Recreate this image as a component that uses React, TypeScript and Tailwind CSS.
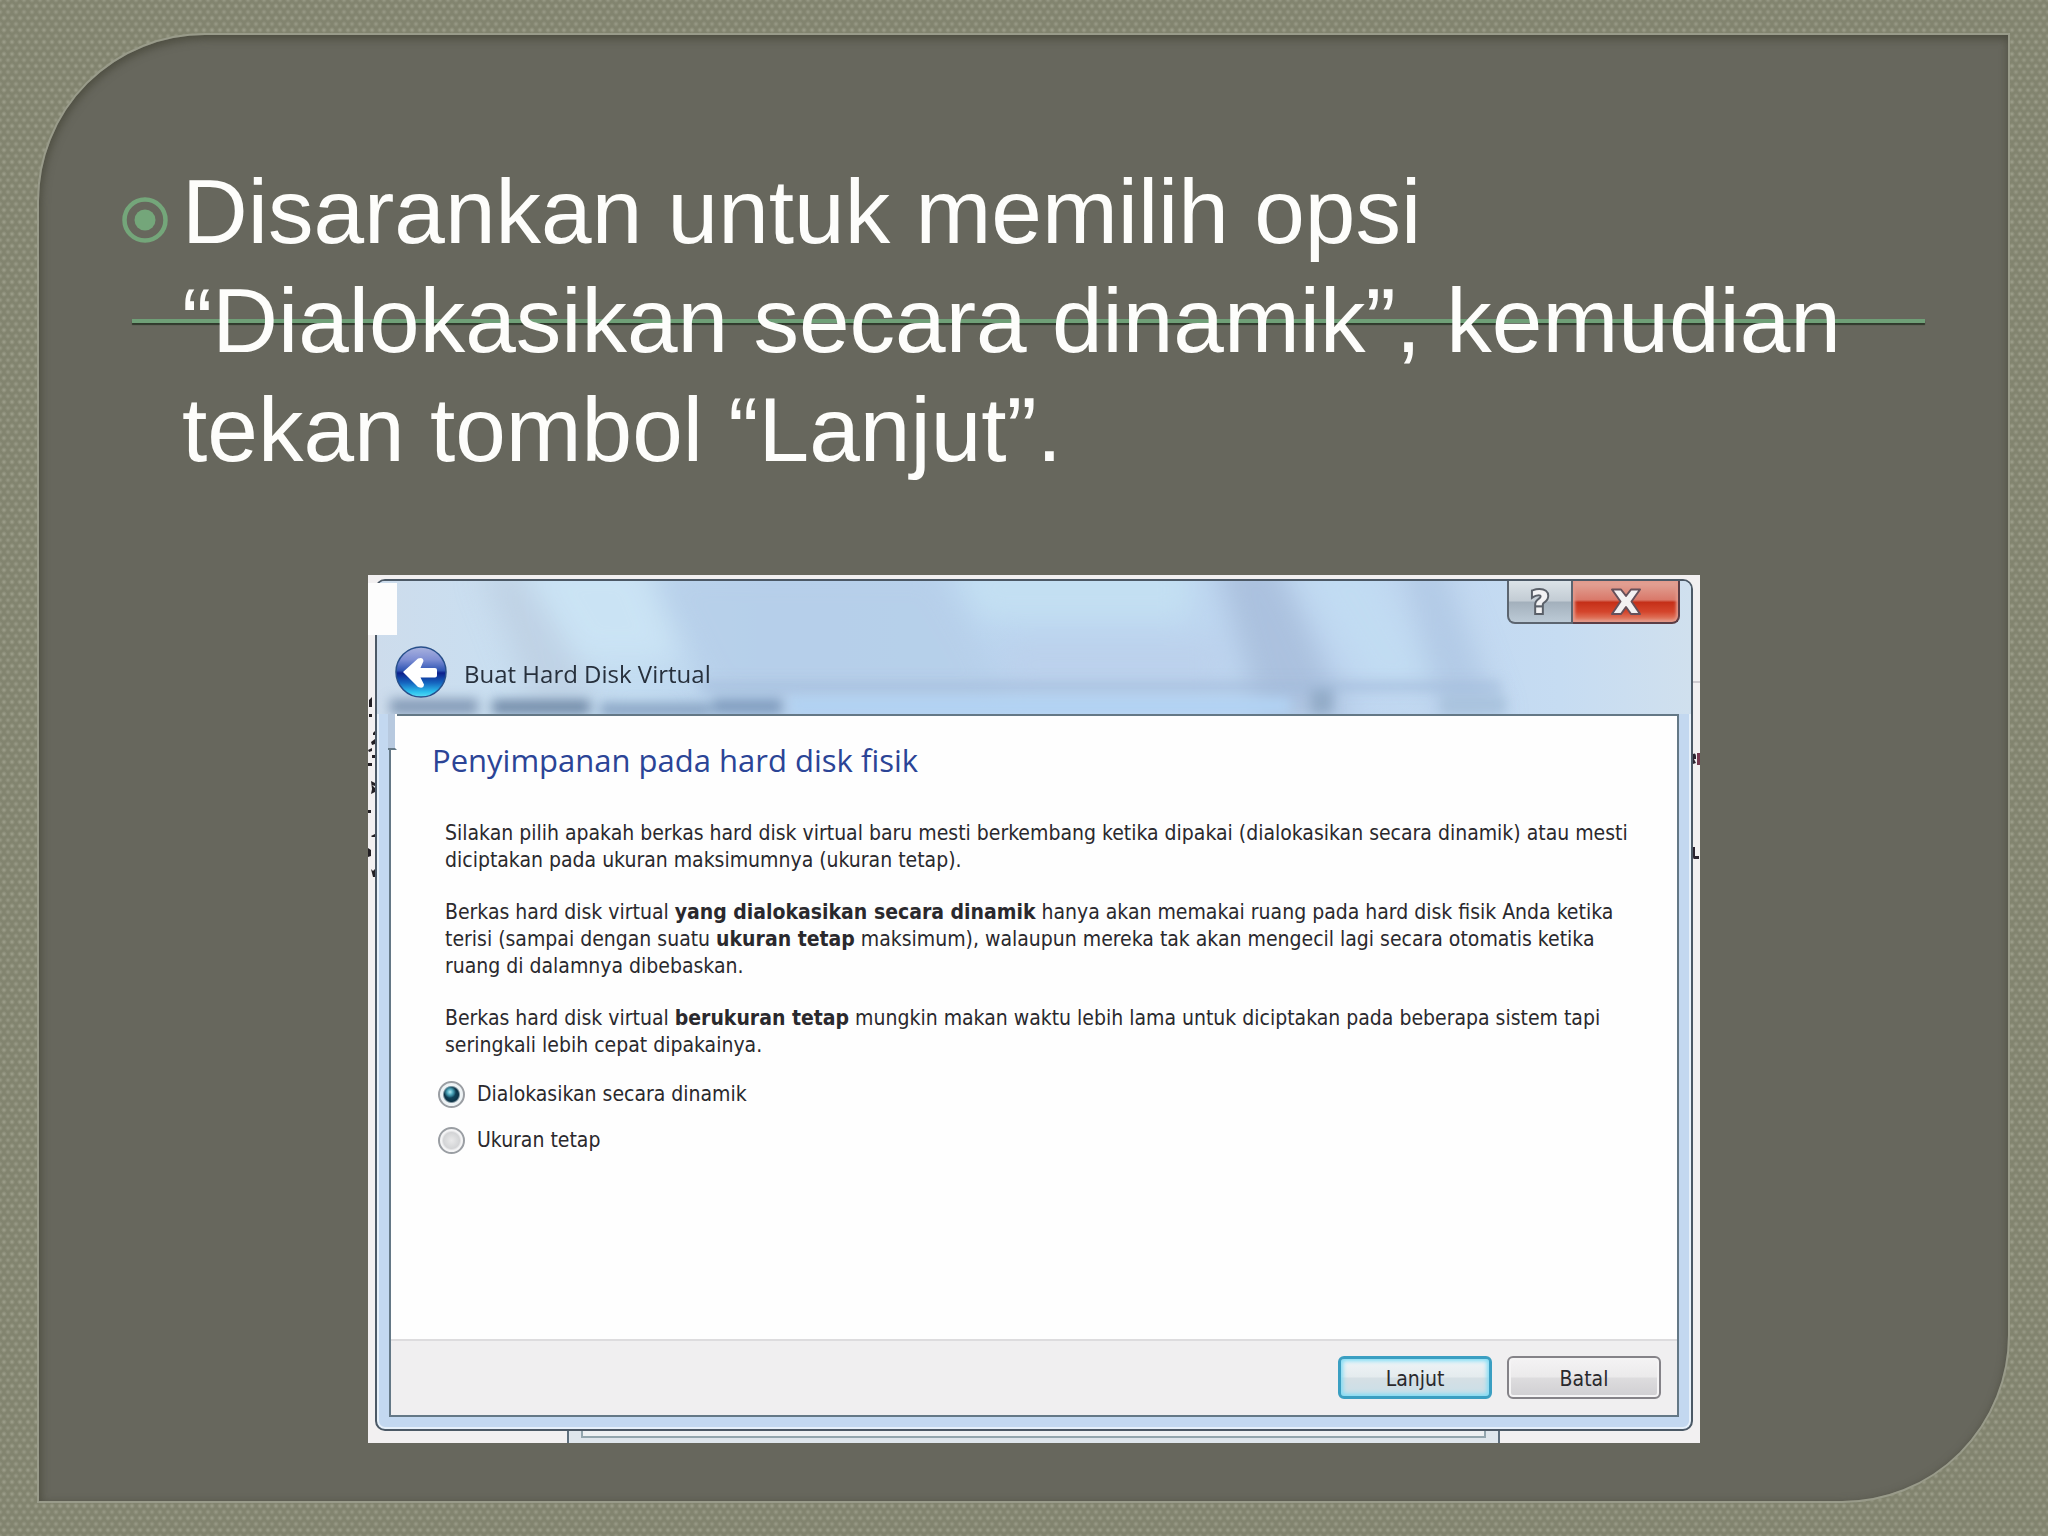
import { useState } from 'react';

const storageOptions = [
  { id: 'dynamic', label: 'Dialokasikan secara dinamik' },
  { id: 'fixed', label: 'Ukuran tetap' },
];

function BulletIcon() {
  return (
    <svg className="mt-10 h-[46px] w-[46px] shrink-0" viewBox="0 0 46 46" fill="none" aria-hidden="true">
      <circle cx="23" cy="23" r="20.5" stroke="#74a67a" strokeWidth="4.5" />
      <circle cx="23" cy="23" r="10.5" fill="#74a67a" />
    </svg>
  );
}

function BackIcon() {
  return (
    <svg className="h-full w-full" viewBox="0 0 52 52" aria-hidden="true">
      <defs>
        <linearGradient id="orb" x1="0" y1="0" x2="0" y2="1">
          <stop offset="0" stopColor="#a9b2de" />
          <stop offset="0.25" stopColor="#7f8fd4" />
          <stop offset="0.47" stopColor="#2f55b4" />
          <stop offset="0.52" stopColor="#0c1f8c" />
          <stop offset="0.72" stopColor="#1667c0" />
          <stop offset="0.9" stopColor="#2cc0ee" />
          <stop offset="1" stopColor="#58dcf4" />
        </linearGradient>
      </defs>
      <circle cx="26" cy="26" r="26" fill="#c9d3e2" />
      <circle cx="26" cy="26" r="25" fill="url(#orb)" stroke="#27508c" strokeWidth="1.5" />
      <path
        d="M8 26 23 12.500q5-2 5.500 2.500L25.500 22H40q2 0 2 2v5.500q0 2-2 2H25.500l3.500 7q-0.500 5-6 2.500z"
        fill="#fff"
      />
    </svg>
  );
}

// Aero glass reflections behind the title bar
function Glass() {
  return (
    <svg
      className="absolute inset-0 h-full w-full"
      viewBox="377 581 1313 133"
      preserveAspectRatio="none"
      aria-hidden="true"
    >
      <defs>
        <linearGradient id="glass" x1="0" y1="0" x2="1" y2="0">
          <stop offset="0" stopColor="#cddcec" />
          <stop offset="0.1" stopColor="#c9dff1" />
          <stop offset="0.2" stopColor="#c3dcf1" />
          <stop offset="0.3" stopColor="#b9d2ed" />
          <stop offset="0.5" stopColor="#bcd6f0" />
          <stop offset="0.75" stopColor="#bfd6f0" />
          <stop offset="0.9" stopColor="#c6dcf2" />
          <stop offset="1" stopColor="#d0e0ee" />
        </linearGradient>
        <filter id="soft" x="-20%" y="-20%" width="140%" height="140%">
          <feGaussianBlur stdDeviation="14" />
        </filter>
        <filter id="smudge" x="-20%" y="-100%" width="140%" height="300%">
          <feGaussianBlur stdDeviation="6" />
        </filter>
      </defs>
      <rect x="377" y="581" width="1313" height="133" fill="url(#glass)" />
      <g filter="url(#soft)">
        <path d="M480 570H520L600 700H530z" fill="#bccde0" opacity="0.7" />
        <path d="M520 560H640L680 660H580z" fill="#cae3f4" />
        <path d="M650 570H935L1010 700H715z" fill="#b5cee9" opacity="0.8" />
        <path d="M950 560H1190V620H980z" fill="#c3dff2" />
        <path d="M1000 640H1220V690H1010z" fill="#bcd0eb" opacity="0.8" />
        <path d="M1215 560H1275L1350 720H1260z" fill="#a8bfdb" opacity="0.9" />
        <path d="M1290 560H1370L1440 690H1370z" fill="#c1dbf2" />
        <path d="M1400 560H1440L1500 720H1440z" fill="#afc7e3" opacity="0.8" />
      </g>
      <g filter="url(#smudge)">
        <path d="M700 682H1500V691H700z" fill="#a3bbdb" opacity="0.8" />
        <path d="M790 698H1290V714H790z" fill="#b1d2f3" />
        <path d="M1310 690H1332V714H1310z" fill="#93acc8" />
        <path d="M1440 696H1505V714H1440z" fill="#a9c2dd" />
        <path d="M390 699H478V714H390z" fill="#8299b5" />
        <path d="M492 700H590V714H492z" fill="#6f88a6" />
        <path d="M600 703H710V716H600z" fill="#87a3c2" />
        <path d="M712 699H782V714H712z" fill="#7f9bbd" />
      </g>
    </svg>
  );
}

// Slivers of whatever is open behind the dialog
function LeftSpecks() {
  return (
    <svg className="absolute top-[122px] left-0 h-[200px] w-[7px]" viewBox="0 0 7 200" aria-hidden="true">
      <path
        d="M1 3 4 0v10H1zM1 17h3v3H1zM5 36l2-2v4H5zM3 45l4-3v5l-3 1zM0 53l4-2v3l-3 1zM4 58h3v3H4zM0 66h4v3H0zM3 84l4 2v3l-3-1 3 3v4l-4 2 1-5zM0 113h3v3H0zM3 139l4-2v3H4zM0 151l3 2v6l-3 1zM3 172l2 2 2-2v8H5z"
        fill="#221f24"
      />
    </svg>
  );
}

function RightSpecks() {
  return (
    <svg className="absolute top-[106px] right-0 h-[200px] w-[7px]" viewBox="0 0 7 200" aria-hidden="true">
      <path d="M0 0H7V2H0z" fill="#cfcbd0" />
      <path d="M0 73q3-2 3 3v2H1l2 4-3 1zM0 166h2v9h4v3H1q-1 0-1-2z" fill="#2b2430" />
      <path d="M4 72H7V84H4z" fill="#75374e" />
    </svg>
  );
}

function TitleBar() {
  return (
    <header className="relative h-[133px]">
      <Glass />
      <div className="relative flex h-full flex-col">
        <div className="mr-[11px] flex h-[43px] justify-end">
          <button
            type="button"
            aria-label="Bantuan"
            className="flex w-[66px] items-center justify-center rounded-bl-lg border-2 border-t-0 border-[#5c6570] bg-[linear-gradient(#dbe3e8_0%,#c3ccd4_48%,#a3b0bc_52%,#bccad6_100%)] font-['DejaVu_Sans',sans-serif] text-[32px] leading-none font-bold text-[#f2f2f4] [-webkit-text-stroke:4px_#5a6069] [paint-order:stroke_fill]"
          >
            ?
          </button>
          <button
            type="button"
            aria-label="Tutup"
            className="flex w-[107px] items-center justify-center rounded-br-lg border-2 border-t-0 border-l-0 border-[#5b3e46] bg-[linear-gradient(#e3a79b_0%,#d9796a_46%,#c52f18_52%,#d4452c_75%,#e58c74_100%)] shadow-[inset_0_0_3px_2px_#e39a8c]"
          >
            <svg className="h-7 w-8" viewBox="0 0 32 28" aria-hidden="true">
              <path
                d="M2 1.500H11L16 8l5-6.500h9L21.500 13.500 30 26H21l-5-7-5 7H2l8.500-12.500z"
                fill="#f3f1f2"
                stroke="#66505a"
                strokeWidth="2"
                strokeLinejoin="round"
              />
            </svg>
          </button>
        </div>
        <div className="mt-[22px] flex items-center gap-[17px] pl-[18px]">
          <button type="button" aria-label="Kembali" className="h-[52px] w-[52px]">
            <BackIcon />
          </button>
          <h1 className="pt-1 font-['Open_Sans',sans-serif] text-2xl text-[#27303c]">Buat Hard Disk Virtual</h1>
        </div>
      </div>
    </header>
  );
}

function Wizard() {
  const [storage, setStorage] = useState('dynamic');

  return (
    <div className="overflow-hidden rounded-[10px] border-2 border-[#4c5966] bg-[#c3d8f0] shadow-[inset_0_0_0_2px_#e6f0fa]">
      <TitleBar />
      <div className="mx-3 mb-3 border-2 border-[#647886] bg-[#fefefe]">
        <div className="pt-6 pr-8 pb-[185px] pl-[41px]">
          <h2 className="font-['Open_Sans',sans-serif] text-[31px] leading-10 text-[#2b4496]">
            Penyimpanan pada hard disk fisik
          </h2>
          <div className="mt-10 flex flex-col gap-[25px] pl-[13px]">
            <p>
              Silakan pilih apakah berkas hard disk virtual baru mesti berkembang ketika dipakai (dialokasikan secara
              dinamik) atau mesti diciptakan pada ukuran maksimumnya (ukuran tetap).
            </p>
            <p>
              Berkas hard disk virtual <b>yang dialokasikan secara dinamik</b> hanya akan memakai ruang pada hard disk
              fisik Anda ketika terisi (sampai dengan suatu <b>ukuran tetap</b> maksimum), walaupun mereka tak akan
              mengecil lagi secara otomatis ketika ruang di dalamnya dibebaskan.
            </p>
            <p>
              Berkas hard disk virtual <b>berukuran tetap</b> mungkin makan waktu lebih lama untuk diciptakan pada
              beberapa sistem tapi seringkali lebih cepat dipakainya.
            </p>
          </div>
          <div className="mt-[22px] flex flex-col gap-[19px] pl-[6px]">
            {storageOptions.map(({ id, label }) => (
              <div key={id} className="flex items-center gap-3">
                <input
                  type="radio"
                  id={id}
                  name="storage"
                  checked={storage === id}
                  onChange={() => setStorage(id)}
                  className="h-[27px] w-[27px] appearance-none rounded-full border-2 border-[#9a9ea3] bg-[radial-gradient(circle,#e9e9ea_0,#d3d4d6_8px,#f4f4f5_10px)] checked:bg-[radial-gradient(circle_at_10px_9px,#b5ecf6_0,#4aa3b8_3px,transparent_6px),radial-gradient(circle,#11506a_0,#0d3347_7px,#eef3f5_9px)]"
                />
                <label htmlFor={id}>{label}</label>
              </div>
            ))}
          </div>
        </div>
        <footer className="flex h-[76px] justify-end gap-[15px] border-t-2 border-[#dddcde] bg-[#f0eff0] pt-[15px] pr-4">
          <button
            type="button"
            className="h-[43px] w-[154px] rounded-md border-[3px] border-[#3b9fc2] bg-[linear-gradient(#f0f5f7_0%,#e4ebee_48%,#d5dfe4_52%,#c9dfe8_100%)] pt-1 shadow-[inset_0_0_4px_2px_#7fdcf5]"
          >
            Lanjut
          </button>
          <button
            type="button"
            className="h-[43px] w-[154px] rounded-md border-2 border-[#858388] bg-[linear-gradient(#f4f3f4_0%,#ebeaeb_48%,#dddcde_52%,#d0cfd2_100%)] pt-1 shadow-[inset_0_0_0_2px_#f5f4f5]"
          >
            Batal
          </button>
        </footer>
      </div>
    </div>
  );
}

export default function App() {
  return (
    <div className="flex min-h-screen bg-[#82846f] bg-[radial-gradient(circle,#a0a28f_0,transparent_3px),radial-gradient(circle,#9a9c89_0,transparent_3px)] bg-[size:8px_12px] bg-[position:0_0,4px_6px] pt-[33px] pr-[38px] pb-[33px] pl-[37px]">
      <main className="flex-1 rounded-tl-[168px] rounded-br-[168px] border-2 border-[#999b8a] bg-[#67675d] pt-[122px] pr-[62px] pb-[58px] pl-[83px] shadow-[inset_1px_3px_9px_1px_#4d4d40]">
        <div className="relative">
          <div className="absolute top-[162px] right-[21px] left-[10px] h-[4px] bg-[#6f9f77] shadow-[0_2px_1px_#2f3a2c]" />
          <ul className="relative font-['Liberation_Sans',Arial,sans-serif] text-[91px] leading-[109px] text-[#fdfdfb]">
            <li className="flex gap-[14px]">
              <BulletIcon />
              <span>Disarankan untuk memilih opsi “Dialokasikan secara dinamik”, kemudian tekan tombol “Lanjut”.</span>
            </li>
          </ul>
        </div>

        <section className="relative mx-auto mt-[91px] max-w-[1332px] bg-[#f2f0f1] px-[7px] pt-1 font-['DejaVu_Sans_Condensed','DejaVu_Sans',sans-serif] text-[21px] leading-[27px] text-[#2a292d]">
          <Wizard />
          <div className="mr-[193px] ml-[192px] h-3 border-x-2 border-[#5f6f7d] bg-[#dfe6ec] px-3">
            <div className="h-[7px] border-x-2 border-b-2 border-[#93a6ae] bg-[#eef1f3]" />
          </div>
          <LeftSpecks />
          <RightSpecks />
          {/* torn corner of the window and the notch beside the page */}
          <div className="absolute top-2 left-0 h-[52px] w-[29px] bg-[#fdfdfd]" />
          <div className="absolute top-[139px] left-[20px] h-[36px] w-[9px] border-r-2 border-b-2 border-r-white border-b-[#647886] bg-[#b7c9df]" />
        </section>
      </main>
    </div>
  );
}
